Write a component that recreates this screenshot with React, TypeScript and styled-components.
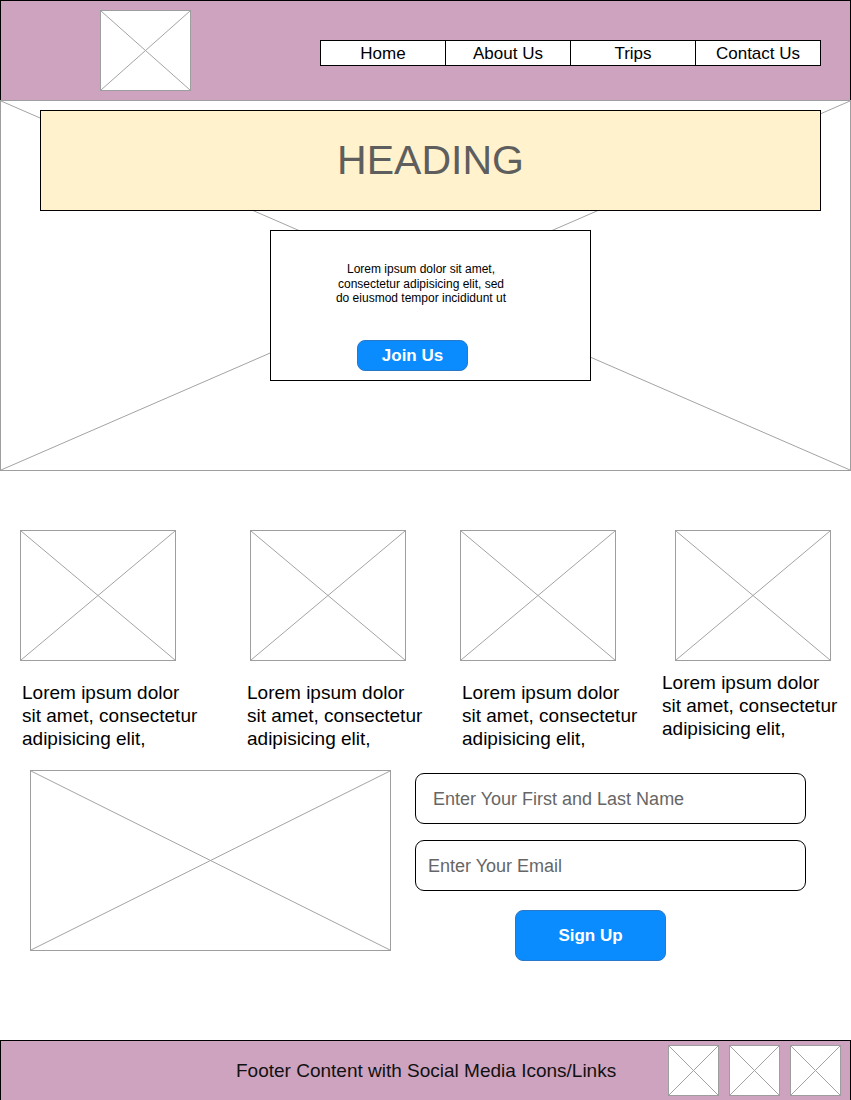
import React from "react";
import styled, { createGlobalStyle } from "styled-components";

const Global = createGlobalStyle`
  html, body { margin: 0; padding: 0; background: #fff; }
  body { font-family: "Liberation Sans", Arial, sans-serif; color: #000; }
  * { box-sizing: border-box; }
`;

const PINK = "#cda3bf";
const BLUE = "#0a8cff";

const Page = styled.div`
  width: 851px;
  display: flex;
  flex-direction: column;
`;

const PhBox = styled.div<{ $w: number; $h: number }>`
  position: relative;
  flex: none;
  width: ${(p) => p.$w}px;
  height: ${(p) => p.$h}px;
  background: #fff;
  border: 1px solid #9e9e9e;
  svg {
    position: absolute;
    inset: 0;
    width: 100%;
    height: 100%;
  }
`;

const Cross: React.FC = () => (
  <svg viewBox="0 0 100 100" preserveAspectRatio="none" aria-hidden>
    <line x1="0" y1="0" x2="100" y2="100" stroke="#a3a3a3" strokeWidth="1" vectorEffect="non-scaling-stroke" />
    <line x1="100" y1="0" x2="0" y2="100" stroke="#a3a3a3" strokeWidth="1" vectorEffect="non-scaling-stroke" />
  </svg>
);

const Placeholder: React.FC<{ w: number; h: number; className?: string }> = ({ w, h, className }) => (
  <PhBox $w={w} $h={h} className={className}>
    <Cross />
  </PhBox>
);

/* Header */
const Header = styled.header`
  height: 100px;
  background: ${PINK};
  border: 1px solid #000;
  border-bottom: none;
  display: flex;
  align-items: flex-start;
  padding-left: 99px;
`;

const Logo = styled(Placeholder)`
  margin-top: 9px;
`;

const Nav = styled.nav`
  margin: 39px 0 0 129px;
  display: grid;
  grid-template-columns: 124px 125px 125px 125px;
  border: 1px solid #000;
  background: #fff;
`;

const NavItem = styled.a`
  height: 24px;
  padding-top: 1px;
  display: flex;
  align-items: center;
  justify-content: center;
  font-size: 17px;
  color: #000;
  text-decoration: none;
  & + & {
    border-left: 1px solid #000;
  }
`;

/* Hero */
const Hero = styled.section`
  position: relative;
  height: 371px;
  border: 1px solid #9e9e9e;
  display: flex;
  flex-direction: column;
  align-items: flex-start;
  padding: 9px 0 0 39px;
  > svg {
    position: absolute;
    inset: 0;
    width: 100%;
    height: 100%;
  }
`;

const Heading = styled.h1`
  position: relative;
  margin: 0;
  width: 781px;
  height: 101px;
  border: 1px solid #000;
  background: #fff2cc;
  display: flex;
  align-items: center;
  justify-content: center;
  font-size: 41px;
  font-weight: 400;
  color: #5e5e5e;
`;

const Intro = styled.div`
  position: relative;
  margin: 19px 0 0 230px;
  width: 321px;
  height: 151px;
  border: 1px solid #000;
  background: #fff;
  display: flex;
  flex-direction: column;
  align-items: flex-start;
`;

const IntroText = styled.p`
  margin: 31px 0 0 50px;
  width: 200px;
  text-align: center;
  font-size: 12px;
  line-height: 14.5px;
  color: #000;
`;

const PillButton = styled.button<{ $w: number; $h: number; $ml: number; $mt: number }>`
  margin: ${(p) => p.$mt}px 0 0 ${(p) => p.$ml}px;
  width: ${(p) => p.$w}px;
  height: ${(p) => p.$h}px;
  border-radius: 8px;
  border: 1px solid #2a78c8;
  background: ${BLUE};
  color: #fff;
  font-family: "Liberation Sans", Arial, sans-serif;
  font-weight: 700;
  font-size: 17px;
  padding: 1px 0 0;
  cursor: pointer;
`;

/* Cards */
const CardRow = styled.section`
  margin-top: 59px;
  display: flex;
  align-items: flex-start;
  height: 220px;
`;

const Card = styled.div<{ $ml: number }>`
  flex: none;
  width: 156px;
  margin-left: ${(p) => p.$ml}px;
  display: flex;
  flex-direction: column;
`;

const CardText = styled.p<{ $dx: number; $dy: number }>`
  margin: ${(p) => p.$dy}px 0 0 ${(p) => p.$dx}px;
  font-size: 19px;
  line-height: 23px;
  white-space: nowrap;
  color: #000;
`;

/* Sign up */
const SignupSection = styled.section`
  margin-top: 20px;
  display: flex;
  align-items: flex-start;
  padding-left: 30px;
`;

const Form = styled.form`
  margin: 3px 0 0 24px;
  display: flex;
  flex-direction: column;
  align-items: flex-start;
`;

const Field = styled.input<{ $pl: number; $mt: number }>`
  margin-top: ${(p) => p.$mt}px;
  width: 391px;
  height: 51px;
  border: 1px solid #000;
  border-radius: 9px;
  padding: 1px 0 0 ${(p) => p.$pl}px;
  font-family: "Liberation Sans", Arial, sans-serif;
  font-size: 18px;
  color: #000;
  background: #fff;
  outline: none;
  &::placeholder {
    color: #666;
    opacity: 1;
  }
`;

/* Footer */
const Footer = styled.footer`
  margin-top: 79px;
  height: 61px;
  background: ${PINK};
  border: 1px solid #000;
  display: flex;
  align-items: center;
`;

const FooterText = styled.span`
  margin-left: 235px;
  font-size: 19px;
  color: #111;
`;

const Socials = styled.div`
  margin-left: auto;
  margin-right: 9px;
  display: flex;
  gap: 10px;
`;

const cards = [
  { ml: 20, dx: 2, dy: 20 },
  { ml: 74, dx: -3, dy: 20 },
  { ml: 54, dx: 2, dy: 20 },
  { ml: 59, dx: -13, dy: 10 },
];

export default function App() {
  return (
    <Page>
      <Global />
      <Header>
        <Logo w={91} h={81} />
        <Nav>
          <NavItem>Home</NavItem>
          <NavItem>About Us</NavItem>
          <NavItem>Trips</NavItem>
          <NavItem>Contact Us</NavItem>
        </Nav>
      </Header>

      <Hero>
        <Cross />
        <Heading>HEADING</Heading>
        <Intro>
          <IntroText>
            Lorem ipsum dolor sit amet,
            <br />
            consectetur adipisicing elit, sed
            <br />
            do eiusmod tempor incididunt ut
          </IntroText>
          <PillButton type="button" $w={111} $h={31} $ml={86} $mt={34}>
            Join Us
          </PillButton>
        </Intro>
      </Hero>

      <CardRow>
        {cards.map((c, i) => (
          <Card key={i} $ml={c.ml}>
            <Placeholder w={156} h={131} />
            <CardText $dx={c.dx} $dy={c.dy}>
              Lorem ipsum dolor
              <br />
              sit amet, consectetur
              <br />
              adipisicing elit,
            </CardText>
          </Card>
        ))}
      </CardRow>

      <SignupSection>
        <Placeholder w={361} h={181} />
        <Form onSubmit={(e) => e.preventDefault()}>
          <Field $pl={17} $mt={0} placeholder="Enter Your First and Last Name" />
          <Field $pl={12} $mt={16} placeholder="Enter Your Email" />
          <PillButton type="submit" $w={151} $h={51} $ml={100} $mt={19}>
            Sign Up
          </PillButton>
        </Form>
      </SignupSection>

      <Footer>
        <FooterText>Footer Content with Social Media Icons/Links</FooterText>
        <Socials>
          <Placeholder w={51} h={51} />
          <Placeholder w={51} h={51} />
          <Placeholder w={51} h={51} />
        </Socials>
      </Footer>
    </Page>
  );
}
